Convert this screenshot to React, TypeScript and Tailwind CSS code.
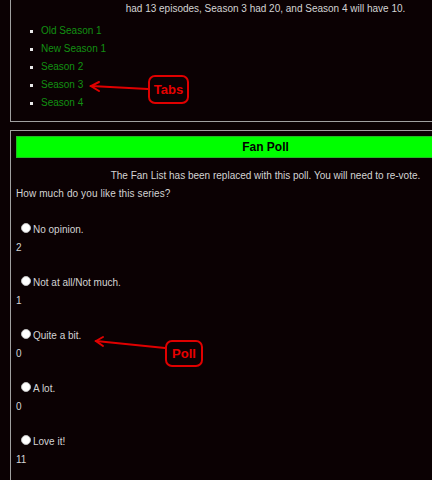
const tabs = ["Old Season 1", "New Season 1", "Season 2", "Season 3", "Season 4"]

const options = [
  { label: "No opinion.", votes: 2 },
  { label: "Not at all/Not much.", votes: 1 },
  { label: "Quite a bit.", votes: 0 },
  { label: "A lot.", votes: 0 },
  { label: "Love it!", votes: 11 },
]

function Callout({ text, className }: { text: string; className: string }) {
  return (
    <div
      className={`absolute flex items-center justify-center rounded-[7px] border-2 border-[#e00000] bg-[#0b0103] text-[13px] font-bold leading-none text-[#e80000] ${className}`}
    >
      {text}
    </div>
  )
}

export default function App() {
  return (
    <div className="relative h-[480px] w-full overflow-hidden bg-[#0b0103] font-['Liberation_Sans',Arial,sans-serif] text-[10px] leading-[18px] text-[#d4d4d4]">
      <div className="w-[520px] pl-[10px]">
        {/* episode guide panel (scrolled, top cut off) */}
        <section className="border-b border-l border-[#a0a0a0] px-[5px] pb-[9px]">
          <p className="text-center">had 13 episodes, Season 3 had 20, and Season 4 will have 10.</p>
          <ul className="mt-[4px]">
            {tabs.map((t) => (
              <li key={t} className="flex items-center">
                <span className="ml-[14px] mr-[8px] h-[3px] w-[3px] bg-[#e8e8e8]" />
                <a className="text-[#129012]">{t}</a>
              </li>
            ))}
          </ul>
        </section>

        {/* fan poll */}
        <section className="mt-[8px] border-l border-t border-[#a0a0a0] px-[5px] pt-[5px] pb-[40px]">
          <div className="h-[22px] border border-[#22bb22] bg-[#00ff00] text-center text-[12px] font-bold leading-[20px] text-black">
            Fan Poll
          </div>
          <p className="mt-[9px] text-center">
            The Fan List has been replaced with this poll. You will need to re-vote.
          </p>
          <p className="tracking-[0.1px]">How much do you like this series?</p>
          {options.map((o, i) => (
            <div key={o.label} className={i === 0 ? "mt-[18px]" : "mt-[17px]"}>
              <div className="flex items-start">
                <span className="ml-[5px] mt-[2px] h-[10px] w-[10px] rounded-full border border-[#bdbdbd] bg-white" />
                <span className="ml-[2px]">{o.label}</span>
              </div>
              <div>{o.votes}</div>
            </div>
          ))}
        </section>
      </div>

      {/* annotations */}
      <svg className="pointer-events-none absolute left-0 top-0" width="432" height="480">
        <g stroke="#e00000" strokeWidth="2" fill="none" strokeLinecap="round">
          <path d="M148 89 L91 86" />
          <path d="M99 82 L91 86 L99 91" />
          <path d="M165 348 L96 341" />
          <path d="M103 337 L96 341 L103 346" />
        </g>
      </svg>
      <Callout text="Tabs" className="left-[148px] top-[75px] h-[29px] w-[41px]" />
      <Callout text="Poll" className="left-[165px] top-[340px] h-[27px] w-[38px]" />
    </div>
  )
}
